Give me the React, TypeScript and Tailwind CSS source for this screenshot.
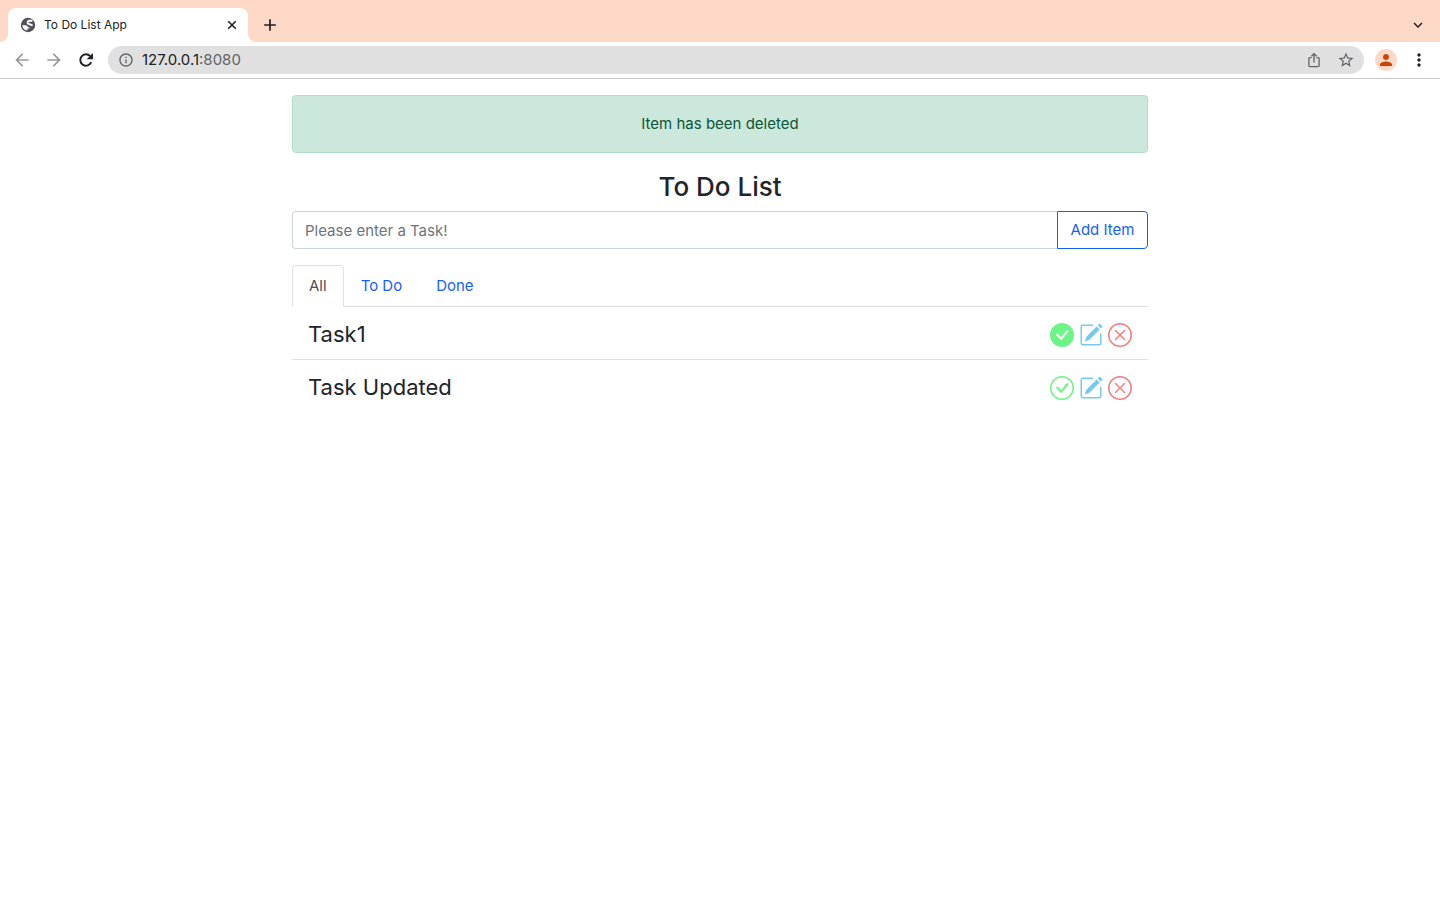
import { useState } from "react";
import type { FormEvent, ReactNode } from "react";
import {
  BsCheckCircle,
  BsCheckCircleFill,
  BsPencilSquare,
  BsXCircle,
} from "react-icons/bs";
import {
  MdAdd,
  MdArrowBack,
  MdArrowForward,
  MdInfoOutline,
  MdKeyboardArrowDown,
  MdMoreVert,
  MdPerson,
  MdStarBorder,
} from "react-icons/md";

type Task = { id: number; title: string; done: boolean };
type Filter = "All" | "To Do" | "Done";

const filters: Filter[] = ["All", "To Do", "Done"];

function IconButton({ label, className = "", onClick, children }: {
  label: string;
  className?: string;
  onClick?: () => void;
  children: ReactNode;
}) {
  return (
    <button
      type="button"
      aria-label={label}
      onClick={onClick}
      className={`flex shrink-0 items-center justify-center ${className}`}
    >
      {children}
    </button>
  );
}

function GlobeIcon() {
  return (
    <svg viewBox="0 0 16 16" className="mr-2 h-4 w-4" aria-hidden="true">
      <circle cx="8" cy="8" r="7.2" fill="#50525a" />
      <path
        d="M12.4 3.8H9.4C8 3.8 7.6 5 7.6 6.2C8.6 7.6 10.6 6.8 12.6 8.6"
        fill="none"
        stroke="#fff"
        strokeWidth="1.9"
        strokeLinejoin="round"
      />
      <path
        d="M2.2 8.2H5.4C7 8.2 7.8 9 7.8 10.2H9.4V11.6H7.4V13.4C4.6 13.2 2.4 11.2 2.2 8.2Z"
        fill="#fff"
      />
    </svg>
  );
}

function CloseIcon() {
  return (
    <svg viewBox="0 0 16 16" className="h-4 w-4" fill="none" stroke="currentColor" strokeWidth="1.6">
      <path d="M4.2 4.2l7.6 7.6M11.8 4.2l-7.6 7.6" />
    </svg>
  );
}

function ReloadIcon() {
  return (
    <svg viewBox="0 0 20 20" className="h-5 w-5" aria-hidden="true">
      <path
        d="M15.2 12.2A5.7 5.7 0 1 1 14.2 6.1"
        fill="none"
        stroke="currentColor"
        strokeWidth="2"
      />
      <path d="M17 3v6.3h-6.3z" fill="currentColor" />
    </svg>
  );
}

function ShareIcon() {
  return (
    <svg
      viewBox="0 0 16 16"
      className="h-4 w-4"
      fill="none"
      stroke="currentColor"
      strokeWidth="1.3"
      aria-hidden="true"
    >
      <path d="M5.6 5.6H3.9a1 1 0 0 0-1 1v7a1 1 0 0 0 1 1h8.2a1 1 0 0 0 1-1v-7a1 1 0 0 0-1-1h-1.7" />
      <path d="M8 10.4V1.8M5.4 4.2L8 1.6l2.6 2.6" />
    </svg>
  );
}

function TabStrip() {
  return (
    <div className="flex h-[42px] items-end bg-[#ffd9c7] pr-3">
      <div className="h-2 w-2 bg-white">
        <div className="h-2 w-2 rounded-br-lg bg-[#ffd9c7]" />
      </div>
      <div className="flex h-[34px] w-60 items-center rounded-t-lg bg-white pr-2 pl-3 text-xs text-[#202124]">
        <GlobeIcon />
        <span className="flex-1">To Do List App</span>
        <IconButton label="Close tab" className="h-4 w-4">
          <CloseIcon />
        </IconButton>
      </div>
      <div className="h-2 w-2 bg-white">
        <div className="h-2 w-2 rounded-bl-lg bg-[#ffd9c7]" />
      </div>
      <IconButton label="New tab" className="ml-1 h-[34px] w-5 text-[#202124]">
        <MdAdd size={20} />
      </IconButton>
      <IconButton label="Search tabs" className="ml-auto h-[34px] w-5 text-[#202124]">
        <MdKeyboardArrowDown size={18} />
      </IconButton>
    </div>
  );
}

function Toolbar() {
  return (
    <div className="flex h-[37px] items-center border-b border-[#c8c8c8] pr-[11px] pl-3">
      <div className="flex gap-3 text-[#9a9a9a]">
        <IconButton label="Back" className="h-5 w-5">
          <MdArrowBack size={20} />
        </IconButton>
        <IconButton label="Forward" className="h-5 w-5">
          <MdArrowForward size={20} />
        </IconButton>
        <IconButton label="Reload" className="h-5 w-5 text-[#202124]">
          <ReloadIcon />
        </IconButton>
      </div>
      <div className="ml-3 flex h-7 flex-1 items-center rounded-full bg-[#e0e0e0] pr-2 pl-2.5 text-[15px] text-[#5f6368]">
        <MdInfoOutline size={16} className="mr-2" />
        <span className="flex-1">
          <span className="text-[#202124]">127.0.0.1</span>:8080
        </span>
        <div className="flex gap-3">
          <IconButton label="Share" className="h-5 w-5">
            <ShareIcon />
          </IconButton>
          <IconButton label="Bookmark" className="h-5 w-5">
            <MdStarBorder size={18} />
          </IconButton>
        </div>
      </div>
      <IconButton label="Profile" className="ml-[11px] h-[22px] w-[22px] rounded-full bg-[#ffd9c7] text-[#cc4400]">
        <MdPerson size={18} />
      </IconButton>
      <IconButton label="Menu" className="ml-3 h-5 w-5 text-[#202124]">
        <MdMoreVert size={20} />
      </IconButton>
    </div>
  );
}

export default function App() {
  const [tasks, setTasks] = useState<Task[]>([
    { id: 1, title: "Task1", done: true },
    { id: 2, title: "Task Updated", done: false },
  ]);
  const [filter, setFilter] = useState<Filter>("All");
  const [draft, setDraft] = useState("");

  const visible = tasks.filter((t) => filter === "All" || t.done === (filter === "Done"));

  const addTask = (event: FormEvent) => {
    event.preventDefault();
    if (!draft.trim()) return;
    setTasks([...tasks, { id: Date.now(), title: draft.trim(), done: false }]);
    setDraft("");
  };

  const toggle = (id: number) =>
    setTasks(tasks.map((t) => (t.id === id ? { ...t, done: !t.done } : t)));

  return (
    <div className="min-h-screen bg-white font-['Inter',sans-serif] text-[#212529]">
      <header>
        <TabStrip />
        <Toolbar />
      </header>
      <main className="mx-auto max-w-[856px] pt-4 text-[15px] leading-6">
        <div
          role="alert"
          className="mb-4 rounded border border-[#aedfc9] bg-[#cce8dc] p-4 text-center text-[#0c5535]"
        >
          Item has been deleted
        </div>
        <h1 className="mb-1.5 text-center text-[26px] leading-9 font-medium">To Do List</h1>
        <form onSubmit={addTask} className="mb-4 flex">
          <input
            type="text"
            aria-label="Task"
            placeholder="Please enter a Task!"
            value={draft}
            onChange={(e) => setDraft(e.target.value)}
            className="h-[38px] min-w-0 flex-1 rounded-l border border-r-0 border-[#cfd4da] px-3 placeholder:text-[#6d757d]"
          />
          <button
            type="submit"
            className="h-[38px] w-[91px] rounded-r border border-[#145ffb] text-[#145ffb]"
          >
            Add Item
          </button>
        </form>
        <div role="tablist" className="flex border-b border-[#dee2e6]">
          {filters.map((name) => (
            <button
              key={name}
              type="button"
              role="tab"
              aria-selected={name === filter}
              onClick={() => setFilter(name)}
              className={
                name === filter
                  ? "-mb-px rounded-t border border-[#dee2e6] border-b-white bg-white px-4 py-2 text-[#495057]"
                  : "-mb-px rounded-t border border-transparent px-4 py-2 text-[#145ffb]"
              }
            >
              {name}
            </button>
          ))}
        </div>
        <ul>
          {visible.map((task) => (
            <li
              key={task.id}
              className="flex h-[53px] items-center justify-between border-b border-[#dedfe0] px-4 last:border-transparent"
            >
              <span className="pt-0.5 text-[22px] leading-8">{task.title}</span>
              <div className="flex gap-[5px] pt-1">
                <IconButton label="Toggle done" className="text-[#6cf587]" onClick={() => toggle(task.id)}>
                  {task.done ? <BsCheckCircleFill size={24} /> : <BsCheckCircle size={24} />}
                </IconButton>
                <IconButton label="Edit task" className="text-[#74caef]">
                  <BsPencilSquare size={24} />
                </IconButton>
                <IconButton
                  label="Delete task"
                  className="text-[#f67e7d]"
                  onClick={() => setTasks(tasks.filter((t) => t.id !== task.id))}
                >
                  <BsXCircle size={24} />
                </IconButton>
              </div>
            </li>
          ))}
        </ul>
      </main>
    </div>
  );
}
